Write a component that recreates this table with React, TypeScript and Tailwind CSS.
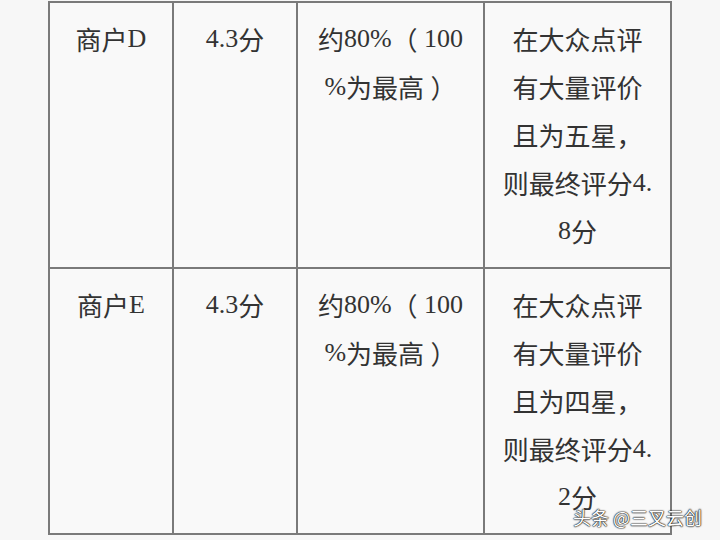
const rows = [
  {
    name: "商户D",
    score: "4.3分",
    ratio: ["约80%（ 100", "%为最高 ）"],
    note: ["在大众点评", "有大量评价", "且为五星，", "则最终评分4.", "8分"],
  },
  {
    name: "商户E",
    score: "4.3分",
    ratio: ["约80%（ 100", "%为最高 ）"],
    note: ["在大众点评", "有大量评价", "且为四星，", "则最终评分4.", "2分"],
  },
];

// latin runs get the serif face on their own, CJK runs get Noto
function Mixed({ text }: { text: string }) {
  const parts = text.match(/[\x20-\x7e]+|[^\x20-\x7e]+/g) ?? [];
  return (
    <>
      {parts.map((p, i) =>
        /^[\x20-\x7e]+$/.test(p) ? (
          <span key={i} className="font-['Liberation_Serif',serif]">
            {p}
          </span>
        ) : (
          <span key={i} className="font-['Noto_Sans_CJK_SC',sans-serif]">
            {p}
          </span>
        )
      )}
    </>
  );
}

function Lines({ lines }: { lines: string[] }) {
  return (
    <>
      {lines.map((l, i) => (
        <div
          key={i}
          className="h-[48px] whitespace-pre flex items-center justify-center leading-none"
        >
          <Mixed text={l} />
        </div>
      ))}
    </>
  );
}

export default function App() {
  const cell = "border-2 border-[#7a7a7a] align-top text-center pt-3 px-2";
  return (
    <div className="relative w-[720px] h-[540px] overflow-hidden bg-[#f7f7f7] pl-[48px] pt-[1px] text-[#333] text-[26px] leading-[48px] font-['Liberation_Serif','Noto_Sans_CJK_SC',serif]">
      <table className="border-collapse table-fixed bg-[#f9f9f9]">
        <colgroup>
          <col className="w-[124px]" />
          <col className="w-[124px]" />
          <col className="w-[187px]" />
          <col className="w-[187px]" />
        </colgroup>
        <tbody>
          {rows.map((r) => (
            <tr key={r.name} className="h-[266px]">
              <td className={cell}>
                <Lines lines={[r.name]} />
              </td>
              <td className={cell}>
                <Lines lines={[r.score]} />
              </td>
              <td className={cell}>
                <Lines lines={r.ratio} />
              </td>
              <td className={cell}>
                <Lines lines={r.note} />
              </td>
            </tr>
          ))}
        </tbody>
      </table>

      <div className="absolute left-[573px] top-[504px] text-[18px] leading-[26px] text-white whitespace-nowrap font-['Noto_Sans_CJK_SC',sans-serif] [text-shadow:0_0_2px_#111,0_0_1px_#111,0_0_1px_#111]">
        头条 @三叉云创
      </div>
    </div>
  );
}
